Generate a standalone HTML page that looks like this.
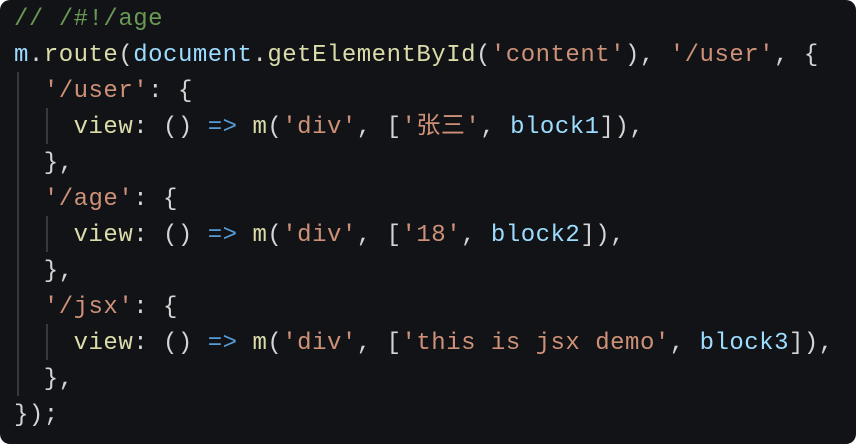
<!DOCTYPE html><html><head><style>
html,body{margin:0;background:#fff;}
.b{position:relative;width:856px;height:444px;background:#111317;border-radius:10px;overflow:hidden;}
pre{margin:0;position:absolute;left:14px;top:2px;font-family:"Liberation Mono","Noto Sans CJK SC",monospace;font-size:24px;line-height:36px;letter-spacing:0.5px;color:#d4d4d4;}
.c{color:#6a9955}.f{color:#dcdcaa}.v{color:#9cdcfe}.s{color:#ce9178}.k{color:#569cd6}
.g{position:absolute;width:2px;background:#35383d;}
</style></head><body><div class="b">
<div class="g" style="left:17px;top:72px;height:324px"></div>
<div class="g" style="left:46px;top:108px;height:36px"></div>
<div class="g" style="left:46px;top:216px;height:36px"></div>
<div class="g" style="left:46px;top:324px;height:36px"></div>
<pre><span class="c">// /#!/age</span>
<span class="v">m</span>.<span class="f">route</span>(<span class="v">document</span>.<span class="f">getElementById</span>(<span class="s">'content'</span>), <span class="s">'/user'</span>, {
  <span class="s">'/user'</span>: {
    <span class="f">view</span>: () <span class="k">=&gt;</span> <span class="f">m</span>(<span class="s">'div'</span>, [<span class="s">'张三'</span>, <span class="v">block1</span>]),
  },
  <span class="s">'/age'</span>: {
    <span class="f">view</span>: () <span class="k">=&gt;</span> <span class="f">m</span>(<span class="s">'div'</span>, [<span class="s">'18'</span>, <span class="v">block2</span>]),
  },
  <span class="s">'/jsx'</span>: {
    <span class="f">view</span>: () <span class="k">=&gt;</span> <span class="f">m</span>(<span class="s">'div'</span>, [<span class="s">'this is jsx demo'</span>, <span class="v">block3</span>]),
  },
});</pre>
</div></body></html>
